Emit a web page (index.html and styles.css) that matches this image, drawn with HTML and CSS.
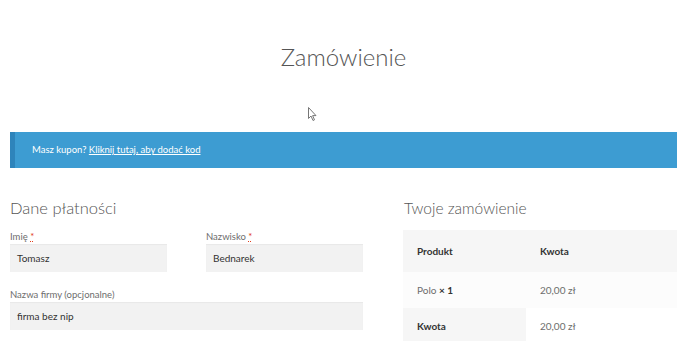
FILE: index.html
```html
<!DOCTYPE html>
<html>
<head>
  <title>Zamówienie</title>
  <link rel="stylesheet" href="styles.css">
</head>
<body>
  <div class="page">
    <h1 class="page-title">Zamówienie</h1>

    <div class="notice">
      Masz kupon? <a href="#">Kliknij tutaj, aby dodać kod</a>
    </div>

    <div class="checkout">
      <div class="billing">
        <h3>Dane płatności</h3>
        <div class="row-half">
          <div class="field">
            <label>Imię <abbr>*</abbr></label>
            <div class="input">Tomasz</div>
          </div>
          <div class="field">
            <label>Nazwisko <abbr>*</abbr></label>
            <div class="input">Bednarek</div>
          </div>
        </div>
        <div class="field">
          <label>Nazwa firmy (opcjonalne)</label>
          <div class="input">firma bez nip</div>
        </div>
      </div>

      <div class="review">
        <h3>Twoje zamówienie</h3>
        <table class="order-table">
          <thead>
            <tr><th>Produkt</th><th>Kwota</th></tr>
          </thead>
          <tbody>
            <tr><td>Polo <strong>× 1</strong></td><td>20,00 zł</td></tr>
          </tbody>
          <tfoot>
            <tr><th>Kwota</th><td>20,00 zł</td></tr>
          </tfoot>
        </table>
      </div>
    </div>
  </div>

  <svg class="cursor" width="10" height="15" viewBox="0 0 10 15">
    <path d="M0.5 0.5 L0.5 11.5 L3 9 L5 13.5 L6.5 12.8 L4.6 8.6 L8 8.6 Z" fill="#fff" stroke="#777" stroke-width="1"/>
  </svg>
</body>
</html>
```

FILE: styles.css
```css
body {
  margin: 0;
  font-family: Lato, "Liberation Sans", sans-serif;
  color: #6d6d6d;
  background: #fff;
  overflow: hidden;
}

.page {
  width: 667px;
  margin-left: 10px;
}

.page-title {
  margin: 0;
  padding-top: 40px;
  height: 132px;
  box-sizing: border-box;
  text-align: center;
  font-size: 24px;
  font-weight: 300;
  color: #555;
  line-height: 34px;
}

.notice {
  height: 36px;
  box-sizing: border-box;
  background: #3d9cd2;
  border-left: 5px solid #2e84bb;
  color: #fff;
  font-size: 9.5px;
  line-height: 36px;
  padding-left: 17px;
}

.notice a {
  color: #fff;
}

.checkout {
  display: grid;
  grid-template-columns: 353px 274px;
  justify-content: space-between;
  margin-top: 28px;
}

h3 {
  margin: 0 0 10px;
  font-size: 16.5px;
  font-weight: 300;
  line-height: 24px;
  color: #555;
}

.review h3 {
  font-size: 15.5px;
  margin-left: 1px;
}

.row-half {
  display: grid;
  grid-template-columns: 157px 157px;
  justify-content: space-between;
  margin-bottom: 16px;
}

.field label {
  display: block;
  font-size: 9.5px;
  line-height: 14px;
  color: #6d6d6d;
}

.field abbr {
  color: #e2401c;
  text-decoration: underline dotted;
}

.input {
  height: 28px;
  line-height: 28px;
  background: #f2f2f2;
  padding-left: 7px;
  font-size: 10px;
  color: #333;
  box-shadow: inset 0 1px 1px rgba(0, 0, 0, 0.04);
}

.order-table {
  width: 100%;
  border-collapse: collapse;
  font-size: 10px;
}

.order-table th,
.order-table td {
  text-align: left;
  padding: 0 14px;
}

.order-table th:first-child,
.order-table td:first-child {
  width: 95px;
}

.order-table thead th {
  height: 42px;
  background: #f6f6f6;
  color: #333;
  font-weight: bold;
}

.order-table tbody td {
  height: 36px;
  background: #fcfcfc;
}

.order-table tbody strong {
  color: #333;
}

.order-table tfoot th {
  height: 36px;
  background: #f6f6f6;
  color: #333;
}

.order-table tfoot td {
  background: #fff;
}

.cursor {
  position: absolute;
  left: 308px;
  top: 107px;
}
```
